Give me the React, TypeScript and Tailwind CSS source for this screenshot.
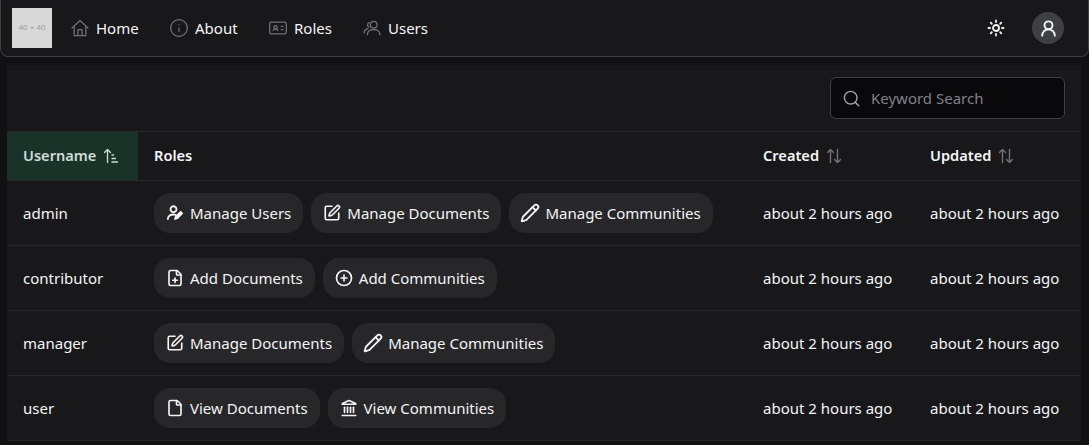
import type { ComponentType } from "react";
import {
  CirclePlus,
  File,
  FilePlus,
  IdCard,
  Info,
  Landmark,
  Pencil,
  Search,
  SquarePen,
  Sun,
  UserRound,
} from "lucide-react";

type Icon = ComponentType<{ className?: string; size?: number; strokeWidth?: number }>;

function HomeIcon({ className, size = 20, strokeWidth = 1.5 }: { className?: string; size?: number; strokeWidth?: number }) {
  return (
    <svg className={className} width={size} height={size} viewBox="0 0 24 24" fill="none" stroke="currentColor" strokeWidth={strokeWidth} strokeLinecap="round" strokeLinejoin="round">
      <path d="M2.5 12 12 3l9.5 9" />
      <path d="M5 10v11h14V10" />
      <path d="M9.5 21v-7h5v7" />
    </svg>
  );
}

function UsersIcon({ className, size = 20, strokeWidth = 1.5 }: { className?: string; size?: number; strokeWidth?: number }) {
  return (
    <svg className={className} width={size} height={size} viewBox="0 0 24 24" fill="none" stroke="currentColor" strokeWidth={strokeWidth} strokeLinecap="round" strokeLinejoin="round">
      <circle cx="14" cy="8" r="4" />
      <path d="M6.5 20c0-3.800 3.200-6 7.500-6s7.500 2.200 7.500 6" />
      <path d="M8.500 5.500a3.300 3.300 0 0 0-.5 5.500" />
      <path d="M2.500 18c0-2.700 1.600-4.500 4.500-5" />
    </svg>
  );
}

function UserPenIcon({ className, size = 18 }: { className?: string; size?: number; strokeWidth?: number }) {
  return (
    <svg className={className} width={size} height={size} viewBox="0 0 24 24" fill="none" stroke="currentColor" strokeWidth="2.400" strokeLinecap="round" strokeLinejoin="round">
      <circle cx="10" cy="7" r="4" />
      <path d="M2.500 20c0-3.500 3-6 7.500-6 1 0 2 .1 2.800.4" />
      <path d="M21.500 12.500 15 19l-3 1 1-3 6.500-6.500z" fill="currentColor" />
    </svg>
  );
}

// the pencil in the picture runs a little larger than the other chip icons
function LargePencil({ className, strokeWidth }: { className?: string; size?: number; strokeWidth?: number }) {
  return <Pencil className={`-mx-px ${className ?? ""}`} size={20} strokeWidth={strokeWidth} />;
}

const nav: { label: string; icon: Icon; width: string }[] = [
  { label: "Home", icon: HomeIcon, width: "w-[99px]" },
  { label: "About", icon: Info, width: "w-[99px]" },
  { label: "Roles", icon: IdCard, width: "w-[94px]" },
  { label: "Users", icon: UsersIcon, width: "w-[80px]" },
];

const roles = {
  users: { label: "Manage Users", icon: UserPenIcon },
  docs: { label: "Manage Documents", icon: SquarePen },
  comms: { label: "Manage Communities", icon: LargePencil },
  addDocs: { label: "Add Documents", icon: FilePlus },
  addComms: { label: "Add Communities", icon: CirclePlus },
  viewDocs: { label: "View Documents", icon: File },
  viewComms: { label: "View Communities", icon: Landmark },
};

const rows = [
  { name: "admin", roles: [roles.users, roles.docs, roles.comms] },
  { name: "contributor", roles: [roles.addDocs, roles.addComms] },
  { name: "manager", roles: [roles.docs, roles.comms] },
  { name: "user", roles: [roles.viewDocs, roles.viewComms] },
];

const gridCols = "grid grid-cols-[131px_609px_167px_167px]";

function SortIcon() {
  return (
    <svg width="16" height="16" viewBox="0 0 16 16" fill="none" stroke="currentColor" strokeWidth="1.4" strokeLinecap="round" strokeLinejoin="round">
      <path d="M4.500 14.500V1.500M1.500 4.500l3-3 3 3" />
      <path d="M11.500 1.500v13M8.500 11.500l3 3 3-3" />
    </svg>
  );
}

function SortAscIcon() {
  return (
    <svg width="16" height="16" viewBox="0 0 16 16" fill="none" stroke="currentColor" strokeWidth="1.300" strokeLinecap="round" strokeLinejoin="round">
      <path d="M4.500 14.500V1.500M1.500 4.500l3-3 3 3" />
      <path d="M9 7h1.500M9 10.500h3.500M9 14h5.500" />
    </svg>
  );
}

function RoleChip({ label, icon: RoleIcon }: { label: string; icon: Icon }) {
  return (
    <span className="flex h-10 items-center gap-[6px] rounded-[16px] bg-[#27272a] px-3 text-[#f4f4f5]">
      <RoleIcon size={18} strokeWidth={2.2} />
      {label}
    </span>
  );
}

export default function App() {
  return (
    <div className="h-[445px] w-[1089px] overflow-hidden bg-[#111113] font-['Noto_Sans','Open_Sans',sans-serif] text-[15px] text-[#f4f4f5]">
      <nav className="flex h-[57px] items-center justify-between rounded-b-lg border-x border-b border-[#3f3f46] bg-[#18181b] pl-[11px] pr-[24px]">
        <div className="flex items-center">
          <div className="flex size-10 items-center justify-center bg-[#d9d9d9] font-['Liberation_Sans',sans-serif] text-[8px] text-[#9a9a9a]">
            40 × 40
          </div>
          <div className="ml-5 flex items-center">
            {nav.map(({ label, icon: NavIcon, width }) => (
              <div key={label} className={`flex items-center ${width}`}>
                <span className="w-6 shrink-0">
                  <NavIcon size={20} strokeWidth={1.5} className="-ml-[2px] text-[#71717a]" />
                </span>
                <span>{label}</span>
              </div>
            ))}
          </div>
        </div>
        <div className="flex items-center gap-[27px]">
          <Sun size={18} strokeWidth={2.4} />
          <div className="flex size-8 items-center justify-center rounded-full bg-[#3f3f46]">
            <UserRound size={19} strokeWidth={2.4} />
          </div>
        </div>
      </nav>
      <main className="mx-[7px] mt-2 w-[1074px] bg-[#18181b]">
        <div className="flex h-[67px] items-start justify-end border-b border-[#27272a] pr-4 pt-3">
          <div className="flex h-[42px] w-[235px] items-center gap-[10px] rounded-md border border-[#3f3f46] bg-[#09090b] pl-[11px] text-[#80808a]">
            <Search size={19} strokeWidth={1.8} className="text-[#a1a1aa]" />
            <span>Keyword Search</span>
          </div>
        </div>
        <div className={`${gridCols} h-[49px] items-stretch border-b border-[#27272a] text-[14.6px] font-semibold`}>
          <div className="flex items-center gap-[7px] bg-[#1a3329] px-4 text-[#cfdcd6]">
            Username <SortAscIcon />
          </div>
          <div className="flex items-center px-4">Roles</div>
          <div className="flex items-center gap-[7px] px-4">
            Created <span className="text-[#71717a]"><SortIcon /></span>
          </div>
          <div className="flex items-center gap-[7px] px-4">
            Updated <span className="text-[#71717a]"><SortIcon /></span>
          </div>
        </div>
        {rows.map((row) => (
          <div key={row.name} className={`${gridCols} h-[65px] items-center border-b border-[#27272a]`}>
            <div className="px-4">{row.name}</div>
            <div className="flex gap-2 px-4">
              {row.roles.map((r) => (
                <RoleChip key={r.label} label={r.label} icon={r.icon} />
              ))}
            </div>
            <div className="px-4">about 2 hours ago</div>
            <div className="px-4">about 2 hours ago</div>
          </div>
        ))}
      </main>
    </div>
  );
}
